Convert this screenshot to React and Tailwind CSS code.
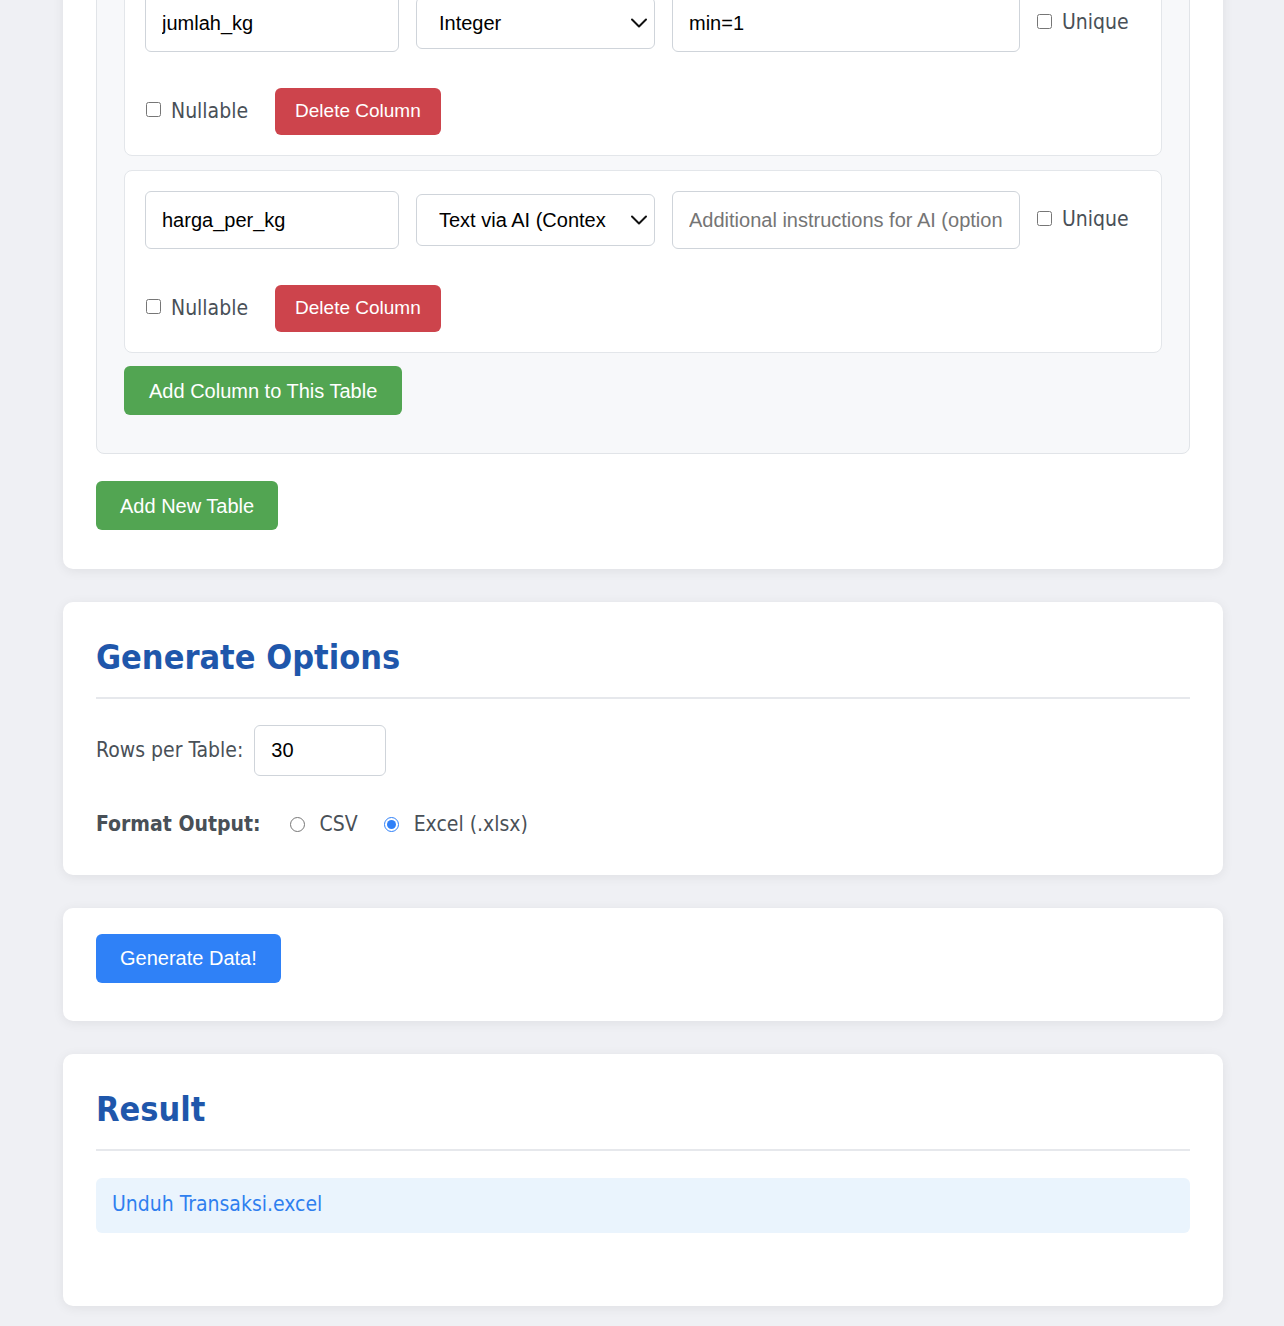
import React, { useState } from 'react';

const tahoma = { fontFamily: '"DejaVu Sans Condensed", "DejaVu Sans", Tahoma, sans-serif' };
const arial = { fontFamily: '"Liberation Sans", Arial, sans-serif' };

const Chevron = () => (
  <svg className="pointer-events-none absolute right-[7px] top-1/2 -translate-y-1/2" width="18" height="11" viewBox="0 0 18 11" fill="none" stroke="#111" strokeWidth="2" strokeLinecap="round" strokeLinejoin="round">
    <path d="M2 2l7 7 7-7" />
  </svg>
);

const ColumnBox = ({ name, type, extra, placeholder, last }) => (
  <div className={`bg-white border border-[#e3e6ea] rounded-[8px] p-[20px] ${last ? '' : 'mb-[14px]'}`}>
    {/* first row */}
    <div className="flex items-center gap-[17px]">
      <input
        type="text"
        defaultValue={name}
        style={arial}
        className="w-[254px] h-[58px] px-[16px] border border-[#cfd4da] rounded-[6px] text-[20px] text-black outline-none"
      />
      <div className="relative">
        <select
          defaultValue={type}
          style={arial}
          className="appearance-none w-[239px] h-[52px] pl-[22px] pr-[48px] border border-[#cfd4da] rounded-[6px] text-[20px] text-black bg-white outline-none"
        >
          <option>Integer</option>
          <option>Text via AI (Context)</option>
        </select>
        <Chevron />
      </div>
      <input
        type="text"
        defaultValue={extra}
        placeholder={placeholder}
        style={arial}
        className="w-[348px] h-[58px] px-[16px] border border-[#cfd4da] rounded-[6px] text-[20px] text-black placeholder:text-[#757575] outline-none"
      />
      <label className="flex items-center gap-[10px] text-[21px] text-[#495057]" style={tahoma}>
        <input type="checkbox" className="m-0 w-[15px] h-[15px] -translate-y-[2px]" />
        Unique
      </label>
    </div>
    {/* second row */}
    <div className="flex items-center gap-[27px] mt-[36px]">
      <label className="flex items-center gap-[10px] text-[21px] text-[#495057]" style={tahoma}>
        <input type="checkbox" className="m-0 ml-[1px] w-[15px] h-[15px] -translate-y-[2px]" />
        Nullable
      </label>
      <button style={arial} className="h-[47px] px-[20px] rounded-[6px] bg-[#cd444c] text-white text-[19px]">
        Delete Column
      </button>
    </div>
  </div>
);

const Card = ({ className = '', children }) => (
  <div className={`bg-white rounded-[10px] shadow-[0_2px_12px_rgba(0,0,0,0.07)] px-[33px] ${className}`}>
    {children}
  </div>
);

const Heading = ({ children, className = 'mb-[26px]' }) => (
  <div className={`border-b-2 border-[#e6e8ec] pb-[18px] ${className}`}>
    <h2 style={tahoma} className="text-[34px] leading-[44px] font-bold text-[#1f57ab]">{children}</h2>
  </div>
);

export default function App() {
  const [format, setFormat] = useState('xlsx');

  return (
    <div className="min-h-[1326px] bg-[#eff0f4] pb-[21px]">
      <div className="w-[1160px] ml-[63px] flex flex-col gap-[33px]">
        {/* Tables card (scrolled, top hidden) */}
        <Card className="-mt-[88px] pt-[33px] pb-[39px]">
          <div className="bg-[#f7f8fa] border border-[#e1e4e8] rounded-[8px] px-[27px] pt-[27px] pb-[38px]">
            <ColumnBox name="jumlah_kg" type="Integer" extra="min=1" />
            <ColumnBox
              name="harga_per_kg"
              type="Text via AI (Context)"
              placeholder="Additional instructions for AI (optional)"
              last
            />
            <button style={arial} className="mt-[13px] h-[49px] px-[25px] rounded-[6px] bg-[#52a552] text-white text-[20px]">
              Add Column to This Table
            </button>
          </div>
          <button style={arial} className="mt-[27px] h-[49px] px-[24px] rounded-[6px] bg-[#52a552] text-white text-[20px]">
            Add New Table
          </button>
        </Card>

        {/* Generate options */}
        <Card className="pt-[33px] pb-[34px]">
          <Heading>Generate Options</Heading>
          <div className="flex items-center gap-[11px]">
            <span style={tahoma} className="text-[21px] text-[#495057]">Rows per Table:</span>
            <input
              type="number"
              defaultValue={30}
              style={arial}
              className="w-[132px] h-[51px] px-[16px] border border-[#cfd4da] rounded-[6px] text-[20px] text-black outline-none"
            />
          </div>
          <div className="flex items-center mt-[33px] text-[21px] text-[#495057]" style={tahoma}>
            <span className="font-bold mr-[29px]">Format Output:</span>
            <label className="flex items-center gap-[15px] mr-[26px]">
              <input
                type="radio"
                name="fmt"
                checked={format === 'csv'}
                onChange={() => setFormat('csv')}
                className="m-0 w-[15px] h-[15px] accent-[#2f80f8]"
              />
              CSV
            </label>
            <label className="flex items-center gap-[15px]">
              <input
                type="radio"
                name="fmt"
                checked={format === 'xlsx'}
                onChange={() => setFormat('xlsx')}
                className="m-0 w-[15px] h-[15px] accent-[#2f80f8]"
              />
              Excel (.xlsx)
            </label>
          </div>
        </Card>

        {/* Generate button */}
        <Card className="pt-[26px] pb-[38px]">
          <button style={arial} className="h-[49px] px-[24px] rounded-[6px] bg-[#2f81f7] text-white text-[20px]">
            Generate Data!
          </button>
        </Card>

        {/* Result */}
        <Card className="pt-[33px] pb-[73px]">
          <Heading className="mb-[27px]">Result</Heading>
          <div className="bg-[#eaf4fd] rounded-[6px] h-[55px] flex items-center px-[16px]">
            <a href="#" style={tahoma} className="text-[21px] text-[#2f7fef]">Unduh Transaksi.excel</a>
          </div>
        </Card>
      </div>
    </div>
  );
}
